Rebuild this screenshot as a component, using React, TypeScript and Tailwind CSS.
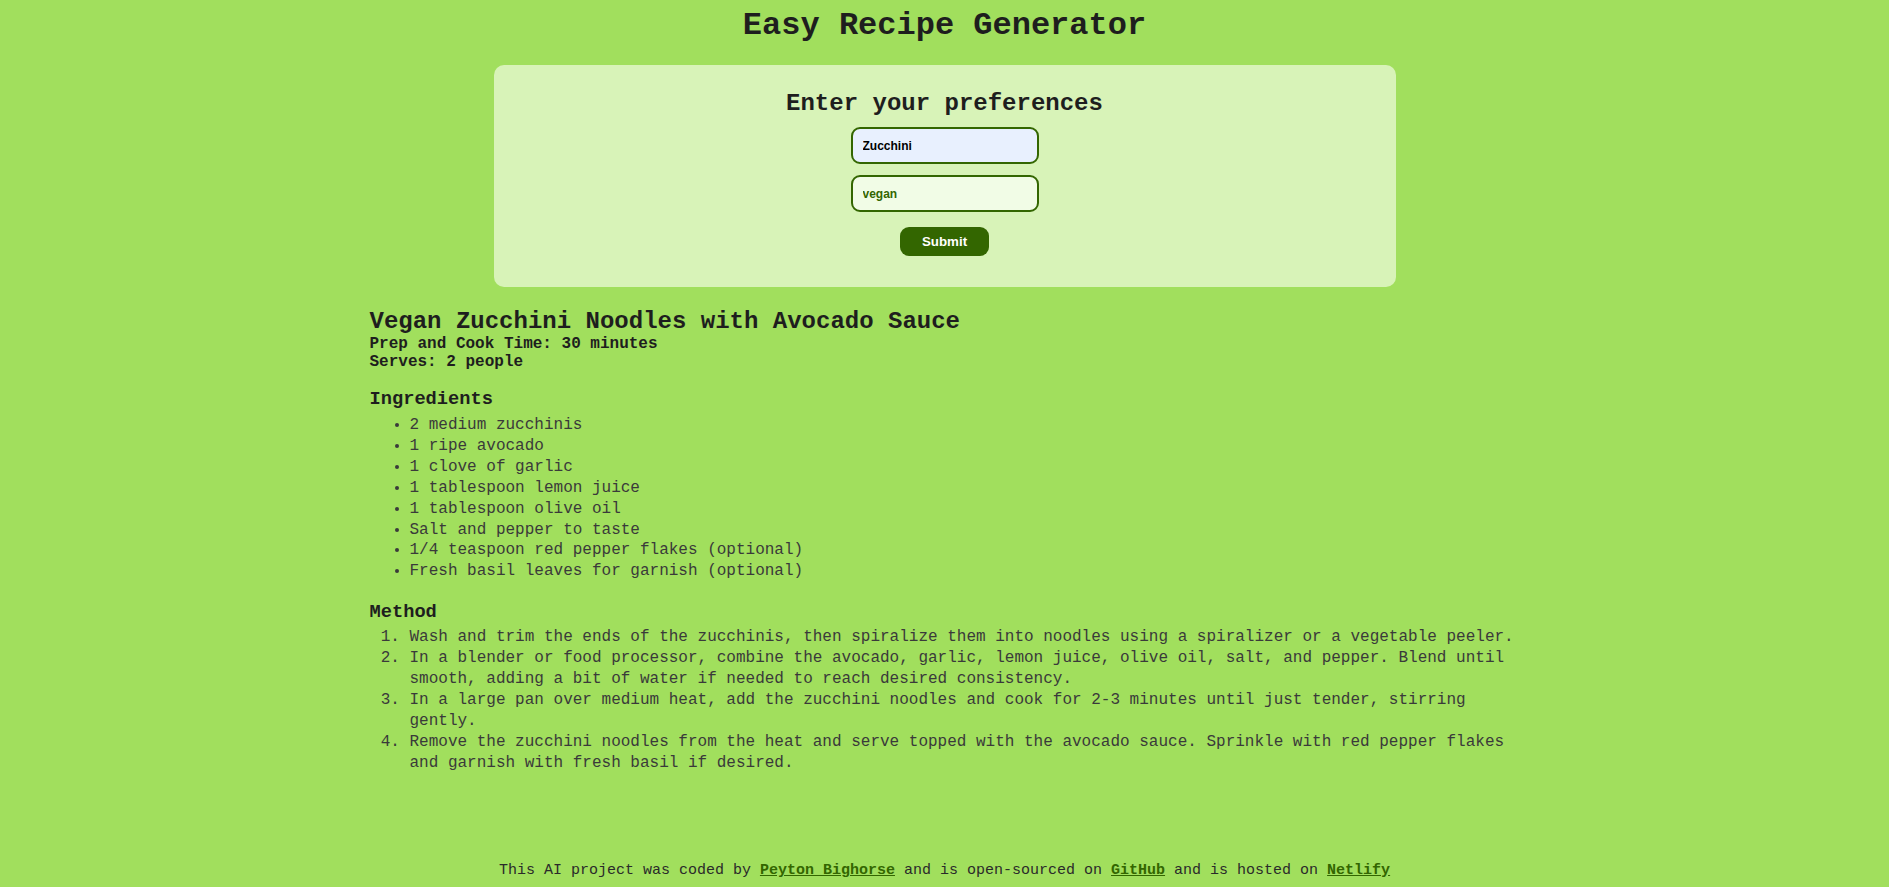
import React from "react";

const ingredients = [
  "2 medium zucchinis",
  "1 ripe avocado",
  "1 clove of garlic",
  "1 tablespoon lemon juice",
  "1 tablespoon olive oil",
  "Salt and pepper to taste",
  "1/4 teaspoon red pepper flakes (optional)",
  "Fresh basil leaves for garnish (optional)",
];

const steps = [
  "Wash and trim the ends of the zucchinis, then spiralize them into noodles using a spiralizer or a vegetable peeler.",
  "In a blender or food processor, combine the avocado, garlic, lemon juice, olive oil, salt, and pepper. Blend until smooth, adding a bit of water if needed to reach desired consistency.",
  "In a large pan over medium heat, add the zucchini noodles and cook for 2-3 minutes until just tender, stirring gently.",
  "Remove the zucchini noodles from the heat and serve topped with the avocado sauce. Sprinkle with red pepper flakes and garnish with fresh basil if desired.",
];

export default function App() {
  return (
    <div className="min-h-screen flex flex-col bg-[#a1df5d] text-[#1e1e1e] font-['Liberation_Mono','Courier_New',monospace]">
      <h1 className="mt-[8px] text-center text-[32px] leading-[36px] font-bold">Easy Recipe Generator</h1>

      {/* Preferences form */}
      <div className="mx-auto mt-[21px] w-[902px] rounded-[10px] bg-[#d8f3b8] pt-[25px] pb-[31px] flex flex-col items-center">
        <h2 className="text-[24px] leading-[27px] font-bold">Enter your preferences</h2>
        <input
          className="mt-[10px] w-[188px] h-[37px] rounded-[9px] border-2 border-[#336600] bg-[#e8f0fe] px-[10px] text-[12px] font-bold text-black font-['Liberation_Sans',Arial,sans-serif] outline-none"
          defaultValue="Zucchini"
        />
        <input
          className="mt-[11px] w-[188px] h-[37px] rounded-[9px] border-2 border-[#336600] bg-[#f1fce6] px-[10px] text-[12px] font-bold text-[#336600] font-['Liberation_Sans',Arial,sans-serif] outline-none"
          defaultValue="vegan"
        />
        <button className="mt-[15px] h-[29px] w-[89px] rounded-[9px] bg-[#336600] text-[13.33px] font-bold text-white font-['Liberation_Sans',Arial,sans-serif]">
          Submit
        </button>
      </div>

      {/* Recipe */}
      <div className="mx-auto mt-[21px] w-[1150px]">
        <h2 className="text-[24px] leading-[27px] font-bold">Vegan Zucchini Noodles with Avocado Sauce</h2>
        <p className="text-[16px] leading-[18px] font-bold">Prep and Cook Time: 30 minutes</p>
        <p className="text-[16px] leading-[18px] font-bold">Serves: 2 people</p>

        <h3 className="mt-[18px] text-[18.72px] leading-[21px] font-bold">Ingredients</h3>
        <ul className="mt-[5px] list-disc pl-[40px] text-[16px] leading-[20.9px] text-[#3a3a3a]">
          {ingredients.map((item) => (
            <li key={item}>{item}</li>
          ))}
        </ul>

        <h3 className="mt-[20px] text-[18.72px] leading-[21px] font-bold">Method</h3>
        <ol className="mt-[4px] list-decimal pl-[40px] text-[16px] leading-[20.9px] text-[#3a3a3a]">
          {steps.map((step) => (
            <li key={step}>{step}</li>
          ))}
        </ol>
      </div>

      <footer className="mt-auto pb-[8px] text-center text-[15px] leading-[17px] text-[#2a2a2a]">
        This AI project was coded by{" "}
        <a href="#" className="font-bold text-[#336600] underline">Peyton Bighorse</a> and is open-sourced on{" "}
        <a href="#" className="font-bold text-[#336600] underline">GitHub</a> and is hosted on{" "}
        <a href="#" className="font-bold text-[#336600] underline">Netlify</a>
      </footer>
    </div>
  );
}
